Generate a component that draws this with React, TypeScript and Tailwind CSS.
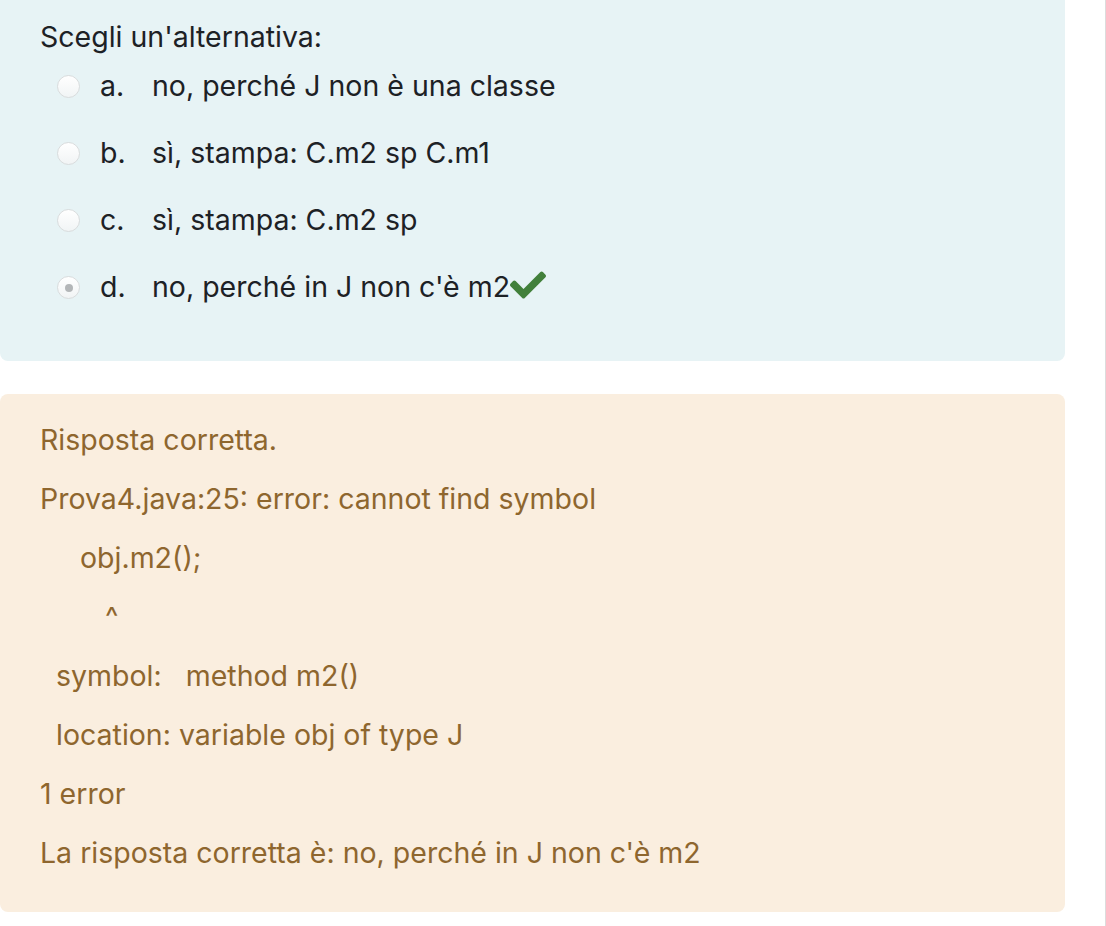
import { FaCheck } from "react-icons/fa"

const options = [
  { letter: "a.", text: "no, perché J non è una classe", checked: false },
  { letter: "b.", text: "sì, stampa: C.m2 sp C.m1", checked: false },
  { letter: "c.", text: "sì, stampa: C.m2 sp", checked: false },
  { letter: "d.", text: "no, perché in J non c'è m2", checked: true },
]

function Radio({ checked }: { checked: boolean }) {
  return (
    <span className="flex h-[23px] w-[23px] shrink-0 items-center justify-center rounded-full border border-[#d9dcdd] bg-gradient-to-b from-white to-[#f1f4f5]">
      {checked && <span className="h-[8px] w-[8px] rounded-full bg-[#b3b6b8]" />}
    </span>
  )
}

export default function App() {
  return (
    <div className="min-h-[926px] w-[1106px] border-r border-[#dcdcdc] bg-white font-['Inter',sans-serif] text-[28.5px]">
      <div className="w-[1065px] rounded-b-lg bg-[#e7f3f5] pb-10 pl-10 pt-5 text-[#1d2125]">
        <div className="leading-[34px]">Scegli un'alternativa:</div>
        <div className="mt-[-1px]">
          {options.map((o) => (
            <div key={o.letter} className="flex h-[67px] items-center">
              <div className="ml-[17px] mr-[20px]">
                <Radio checked={o.checked} />
              </div>
              <span className="w-[52px]">{o.letter}</span>
              <span>{o.text}</span>
              {o.checked && <FaCheck className="mb-[6px] text-[36px] text-[#42803b]" />}
            </div>
          ))}
        </div>
      </div>

      <div className="mt-[33px] w-[1065px] rounded-lg bg-[#faeedf] pb-[29px] pl-10 pt-[17px] text-[#8e662e]">
        <div className="flex h-[59px] items-center">Risposta corretta.</div>
        <div className="flex h-[59px] items-center">Prova4.java:25: error: cannot find symbol</div>
        <div className="flex h-[59px] items-center pl-10">obj.m2();</div>
        <div className="flex h-[59px] items-center pl-[65px]">^</div>
        <div className="flex h-[59px] items-center whitespace-pre pl-4">symbol:   method m2()</div>
        <div className="flex h-[59px] items-center pl-4">location: variable obj of type J</div>
        <div className="flex h-[59px] items-center">1 error</div>
        <div className="flex h-[59px] items-center">La risposta corretta è: no, perché in J non c'è m2</div>
      </div>
    </div>
  )
}
